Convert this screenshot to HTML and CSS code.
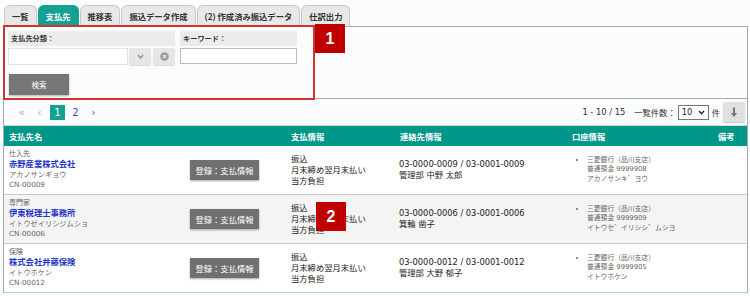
FILE: index.html
```html
<!DOCTYPE html>
<html lang="ja">
<head>
    <meta charset="UTF-8">
    <meta name="viewport" content="width=device-width, initial-scale=1.0">
    <title>支払先</title>
    <link rel="stylesheet" href="styles.css">
</head>
<body>
    <!-- Tabs -->
    <div class="tabs">
        <div class="tab">一覧</div>
        <div class="tab active">支払先</div>
        <div class="tab">推移表</div>
        <div class="tab">振込データ作成</div>
        <div class="tab">(2) 作成済み振込データ</div>
        <div class="tab">仕訳出力</div>
    </div>

    <div class="panel">
        <!-- Search form -->
        <div class="search-area">
            <form class="search-box">
                <div class="fields">
                    <div class="field field-kind">
                        <div class="label">支払先分類：</div>
                        <div class="combo">
                            <div class="combo-input"></div>
                            <div class="combo-btn">
                                <svg width="7" height="5" viewBox="0 0 7 5"><path d="M1 1 L3.5 4 L6 1" fill="none" stroke="#888" stroke-width="1.2"/></svg>
                            </div>
                            <div class="combo-btn clear">
                                <svg width="9" height="9" viewBox="0 0 9 9"><circle cx="4.5" cy="4.5" r="4.2" fill="#999"/><path d="M2.8 2.8 L6.2 6.2 M6.2 2.8 L2.8 6.2" stroke="#eee" stroke-width="1.2"/></svg>
                            </div>
                        </div>
                    </div>
                    <div class="field field-keyword">
                        <div class="label">キーワード：</div>
                        <div class="text-input"></div>
                    </div>
                </div>
                <div class="btn-search">検索</div>
            </form>
            <div class="badge badge-1">1</div>
        </div>

        <!-- Pager -->
        <div class="pager-row">
            <div class="pager">
                <span class="pg muted">«</span>
                <span class="pg muted">‹</span>
                <span class="pg current">1</span>
                <span class="pg link">2</span>
                <span class="pg link">›</span>
            </div>
            <div class="pager-info">
                <span class="count">1 - 10 / 15</span>
                <span class="per-page">一覧件数：</span>
                <div class="select">
                    <span>10</span>
                    <svg width="7" height="5" viewBox="0 0 7 5"><path d="M1 1 L3.5 3.8 L6 1" fill="none" stroke="#222" stroke-width="1.4"/></svg>
                </div>
                <span class="unit">件</span>
                <div class="btn-download">
                    <svg width="8" height="11" viewBox="0 0 8 11"><path d="M4 0.5 V9" stroke="#777" stroke-width="2"/><path d="M0.8 6 L4 10 L7.2 6 Z" fill="#777"/></svg>
                </div>
            </div>
        </div>

        <!-- List -->
        <div class="list">
            <div class="list-head">
                <div class="col-name">支払先名</div>
                <div>支払情報</div>
                <div>連絡先情報</div>
                <div>口座情報</div>
                <div>備考</div>
            </div>

            <div class="row">
                <div class="name-cell">
                    <div class="kind">仕入先</div>
                    <div class="name">赤野産業株式会社</div>
                    <div class="kana">アカノサンギョウ</div>
                    <div class="code">CN-00009</div>
                </div>
                <div><div class="btn-reg">登録：支払情報</div></div>
                <div class="pay-cell">振込<br>月末締め翌月末払い<br>当方負担</div>
                <div class="contact-cell">03-0000-0009 / 03-0001-0009<br>管理部 中野 太郎</div>
                <ul class="bank-cell">
                    <li>三菱銀行（品川支店）<br>普通預金 9999908<br>アカノサンキ゛ヨウ</li>
                </ul>
                <div></div>
            </div>

            <div class="row alt">
                <div class="name-cell">
                    <div class="kind">専門家</div>
                    <div class="name">伊東税理士事務所</div>
                    <div class="kana">イトウゼイリシジムショ</div>
                    <div class="code">CN-00006</div>
                </div>
                <div><div class="btn-reg">登録：支払情報</div></div>
                <div class="pay-cell">振込<br>月末締め翌月末払い<br>当方負担</div>
                <div class="contact-cell">03-0000-0006 / 03-0001-0006<br>箕輪 凿子</div>
                <ul class="bank-cell">
                    <li>三菱銀行（品川支店）<br>普通預金 9999909<br>イトウセ゛イリシシ゛ムシヨ</li>
                </ul>
                <div></div>
                <div class="badge badge-2">2</div>
            </div>

            <div class="row">
                <div class="name-cell">
                    <div class="kind">保険</div>
                    <div class="name">株式会社井藤保険</div>
                    <div class="kana">イトウホケン</div>
                    <div class="code">CN-00012</div>
                </div>
                <div><div class="btn-reg">登録：支払情報</div></div>
                <div class="pay-cell">振込<br>月末締め翌月末払い<br>当方負担</div>
                <div class="contact-cell">03-0000-0012 / 03-0001-0012<br>管理部 大野 郁子</div>
                <ul class="bank-cell">
                    <li>三菱銀行（品川支店）<br>普通預金 9999905<br>イトウホケン</li>
                </ul>
                <div></div>
            </div>
        </div>
    </div>
</body>
</html>
```

FILE: styles.css
```css
/* General Reset */
* {
    margin: 0;
    padding: 0;
    box-sizing: border-box;
}

body {
    font-family: "DejaVu Sans", "Noto Sans CJK JP", sans-serif;
    font-size: 8.3px;
    color: #333;
    background: #fbfcfc;
    padding: 5px 2px 0 3px;
}

/* Tabs */
.tabs {
    display: flex;
    gap: 1px;
    height: 21px;
    margin-left: 1px;
}

.tab {
    display: flex;
    align-items: center;
    padding: 0 7px;
    border: 1px solid #c8c8c8;
    border-bottom: none;
    border-radius: 6px 6px 0 0;
    background: #e8e8e8;
    font-family: "Noto Sans CJK JP", sans-serif;
    font-weight: bold;
    color: #333;
}

.tab.active {
    background: #13a193;
    border-color: #13a193;
    color: #fff;
}

/* Panel */
.panel {
    border: 1px solid #aaa;
    border-bottom: none;
}

.search-area {
    position: relative;
    height: 74px;
    border-bottom: 1px solid #aaa;
}

.search-box {
    width: 312px;
    height: 75px;
    margin: -2px 0 0 -1px;
    border: 2px solid #d03333;
    padding: 4px 0 0 3px;
}

.fields {
    display: flex;
    gap: 5px;
}

.field-kind {
    width: 167px;
}

.field-keyword {
    width: 117px;
}

.label {
    height: 15px;
    line-height: 15px;
    padding-left: 3px;
    background: #ececec;
    font-size: 7.2px;
    font-weight: bold;
    color: #333;
}

.combo {
    display: flex;
    height: 17px;
    margin-top: 2px;
}

.combo-input {
    width: 120px;
    border: 1px solid #e2e2e2;
    background: #fff;
}

.combo-btn {
    width: 22px;
    margin-left: 1px;
    display: flex;
    align-items: center;
    justify-content: center;
    background: #e6e6e6;
    border-radius: 2px;
    box-shadow: 0 1px 1px rgba(0, 0, 0, 0.15);
}

.combo-btn.clear {
    margin-left: 2px;
}

.text-input {
    height: 16px;
    margin-top: 2px;
    border: 1px solid #bbb;
    background: #fff;
}

.btn-search {
    width: 60px;
    height: 21px;
    margin: 9px 0 0 1px;
    display: flex;
    align-items: center;
    justify-content: center;
    background: #767676;
    color: #fff;
    font-size: 7.5px;
    box-shadow: 0 1px 2px rgba(0, 0, 0, 0.3);
}

.badge {
    position: absolute;
    width: 30px;
    height: 29px;
    display: flex;
    align-items: center;
    justify-content: center;
    background: #c00000;
    color: #fff;
    font-family: "Liberation Sans", sans-serif;
    font-size: 16px;
    font-weight: bold;
}

.badge-1 {
    left: 311px;
    top: -1px;
}

.badge-2 {
    left: 312px;
    top: 7px;
}

/* Pager */
.pager-row {
    height: 26px;
    display: flex;
    align-items: center;
    justify-content: space-between;
    padding: 0 2px 0 9px;
}

.pager {
    display: flex;
    gap: 1px;
    align-items: center;
}

.pg {
    width: 17px;
    height: 15px;
    line-height: 15px;
    text-align: center;
    font-family: "DejaVu Sans", sans-serif;
    font-size: 10px;
}

.pg.muted {
    color: #aaa;
}

.pg.link {
    color: #3a50c8;
}

.pg.current {
    width: 15px;
    margin: 0 1px;
    background: #13a193;
    color: #fff;
}

.pager-info {
    display: flex;
    align-items: center;
    color: #333;
}

.count {
    margin-right: 9px;
}

.select {
    width: 31px;
    height: 15px;
    margin-left: 2px;
    padding: 0 3px;
    display: flex;
    align-items: center;
    justify-content: space-between;
    border: 1px solid #777;
    background: #fff;
    color: #222;
}

.unit {
    margin: 0 3px;
}

.btn-download {
    width: 22px;
    height: 20px;
    display: flex;
    align-items: center;
    justify-content: center;
    background: #e0e0e0;
    border-radius: 2px;
    box-shadow: 0 1px 1px rgba(0, 0, 0, 0.2);
}

/* List */
.list {
    border-top: 1px solid #d8d8d8;
}

.list-head,
.row {
    display: grid;
    grid-template-columns: 182px 101px 109px 172px 144px 35px;
    align-items: center;
}

.list-head {
    height: 20px;
    background: #00968a;
    color: #fff;
    font-family: "Noto Sans CJK JP", sans-serif;
    font-weight: bold;
}

.list-head > div {
    padding-left: 4px;
}

.list-head .col-name {
    grid-column: span 2;
    padding-left: 5px;
}

.list-head > div:last-child {
    padding-left: 6px;
}

.row {
    position: relative;
    height: 49px;
    border-bottom: 1px solid #c8c8c8;
    background: #fff;
}

.row.alt {
    background: #f4f4f4;
}

.name-cell {
    padding-left: 5px;
    line-height: 9.8px;
    color: #666;
}

.kind {
    font-size: 7px;
}

.name {
    font-weight: bold;
    color: #2536c6;
}

.kana,
.code {
    font-size: 7.2px;
}

.btn-reg {
    width: 69px;
    height: 20px;
    margin-left: 4px;
    display: flex;
    align-items: center;
    justify-content: center;
    background: #707070;
    color: #fff;
    font-family: "Noto Sans CJK JP", sans-serif;
    box-shadow: 0 1px 2px rgba(0, 0, 0, 0.35);
}

.pay-cell {
    padding-left: 4px;
    line-height: 11px;
    color: #222;
}

.contact-cell {
    padding-left: 3px;
    line-height: 10.7px;
    color: #222;
}

.bank-cell {
    padding-left: 19px;
    font-size: 6.8px;
    line-height: 9.6px;
    color: #666;
}
```
